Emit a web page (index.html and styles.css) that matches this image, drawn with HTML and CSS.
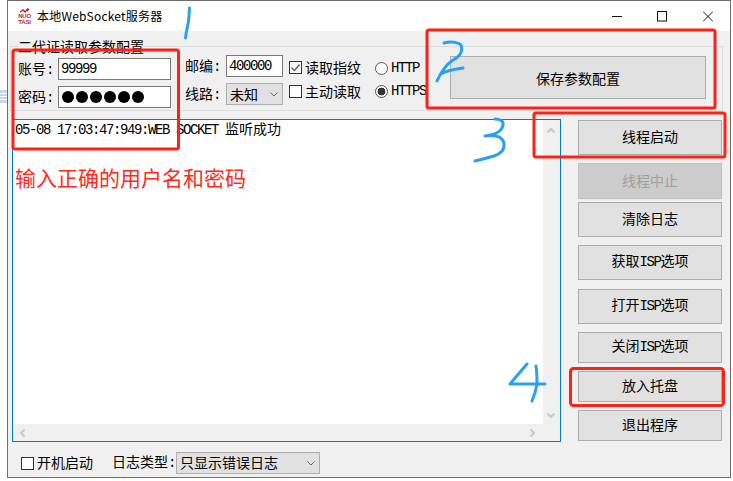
FILE: index.html
```html
<!DOCTYPE html>
<html lang="zh-CN">
<head>
<meta charset="utf-8">
<title>本地WebSocket服务器</title>
<link rel="stylesheet" href="styles.css">
</head>
<body>
<div class="window">
  <header class="titlebar">
    <div class="logo">
      <svg class="logo-mark" width="15" height="5" viewBox="0 0 15 5"><path d="M3 4 L6 2 L8 4 L11 0.5 L10 3 L12 1" fill="none" stroke="#c0272d" stroke-width="1.4"/></svg>
      <span class="logo-text">NUO</span>
      <span class="logo-text">TASI</span>
    </div>
    <span class="title-text">本地WebSocket服务器</span>
    <div class="caption">
      <svg width="10" height="11" viewBox="0 0 10 11"><path d="M0 5.5H10" stroke="#111" stroke-width="1"/></svg>
      <svg width="10" height="11" viewBox="0 0 10 11"><rect x="0.5" y="0.5" width="9" height="9.5" fill="none" stroke="#111"/></svg>
      <svg class="caption-close" width="10" height="11" viewBox="0 0 10 11"><path d="M0 0.5L10 10.5M10 0.5L0 10.5" stroke="#111" stroke-width="1"/></svg>
    </div>
  </header>

  <main class="client">
    <section class="group">
      <span class="legend">二代证读取参数配置</span>
      <div class="col col-account">
        <label class="field"><span class="label label-account">账号<span class="mono">:</span></span><input class="input input-account" value="99999"></label>
        <div class="field"><span class="label label-account">密码<span class="mono">:</span></span>
          <div class="input input-account password"><i></i><i></i><i></i><i></i><i></i><i></i></div>
        </div>
      </div>
      <div class="col col-net">
        <label class="field"><span class="label label-net">邮编<span class="mono">:</span></span><input class="input input-zip" value="400000"></label>
        <div class="field"><span class="label label-net">线路<span class="mono">:</span></span>
          <div class="select select-line"><span>未知</span>
            <svg width="8" height="5" viewBox="0 0 8 5"><path d="M0.5 0.5L4 4L7.5 0.5" fill="none" stroke="#666"/></svg>
          </div>
        </div>
      </div>
      <div class="col col-checks">
        <div class="check-row">
          <span class="box"><svg width="11" height="11" viewBox="0 0 11 11"><path d="M1.5 5.5L4.5 8.5L9.5 2.5" fill="none" stroke="#555" stroke-width="1.3"/></svg></span>
          <span>读取指纹</span>
        </div>
        <div class="check-row"><span class="box"></span><span>主动读取</span></div>
      </div>
      <div class="col col-radios">
        <div class="radio-row"><span class="radio"></span><span class="mono">HTTP</span></div>
        <div class="radio-row"><span class="radio radio-on"></span><span class="mono">HTTPS</span></div>
      </div>
      <button class="btn btn-save">保存参数配置</button>
    </section>

    <section class="main-row">
      <div class="memo">
        <div class="log"><span class="mono">05-08 17:03:47:949:WEB SOCKET </span>监听成功</div>
        <div class="vbar">
          <svg width="8" height="5" viewBox="0 0 8 5"><path d="M0.5 4.5L4 1L7.5 4.5" fill="none" stroke="#c8c8c8" stroke-width="2"/></svg>
          <svg width="8" height="5" viewBox="0 0 8 5"><path d="M0.5 0.5L4 4L7.5 0.5" fill="none" stroke="#c8c8c8" stroke-width="2"/></svg>
        </div>
        <div class="hbar">
          <svg width="5" height="8" viewBox="0 0 5 8"><path d="M4.5 0.5L1 4L4.5 7.5" fill="none" stroke="#c8c8c8" stroke-width="2"/></svg>
          <svg width="5" height="8" viewBox="0 0 5 8"><path d="M0.5 0.5L4 4L0.5 7.5" fill="none" stroke="#c8c8c8" stroke-width="2"/></svg>
        </div>
        <div class="corner"></div>
        <p class="hint">输入正确的用户名和密码</p>
      </div>
      <nav class="actions">
        <button class="btn btn-act btn-first">线程启动</button>
        <button class="btn btn-act btn-disabled btn-h36">线程中止</button>
        <button class="btn btn-act btn-tight">清除日志</button>
        <button class="btn btn-act">获取<span class="mono">ISP</span>选项</button>
        <button class="btn btn-act btn-gap9">打开<span class="mono">ISP</span>选项</button>
        <button class="btn btn-act btn-short">关闭<span class="mono">ISP</span>选项</button>
        <button class="btn btn-act btn-short">放入托盘</button>
        <button class="btn btn-act btn-short">退出程序</button>
      </nav>
    </section>

    <footer class="footer">
      <span class="box"></span>
      <span class="auto-label">开机启动</span>
      <span class="log-label">日志类型<span class="mono">:</span></span>
      <div class="select select-log"><span>只显示错误日志</span>
        <svg width="8" height="5" viewBox="0 0 8 5"><path d="M0.5 0.5L4 4L7.5 0.5" fill="none" stroke="#666"/></svg>
      </div>
    </footer>
  </main>
</div>

<svg class="annotations" width="733" height="481" viewBox="0 0 733 481">
  <g fill="#c7d6e8">
    <rect x="0" y="90" width="7" height="3"/>
    <rect x="0" y="94" width="7" height="2"/>
    <rect x="0" y="97" width="7" height="2"/>
    <rect x="0" y="100" width="7" height="3"/>
  </g>
  <g fill="none" stroke="#ff2016" stroke-width="3" stroke-linejoin="round">
    <rect x="13" y="50" width="165.5" height="99" rx="2"/>
    <rect x="427" y="30" width="288" height="78" rx="2"/>
    <rect x="534" y="113" width="191" height="44" rx="2"/>
    <rect x="570.5" y="368.5" width="153" height="37" rx="3"/>
  </g>
  <g fill="none" stroke="#29a0f6" stroke-width="3" stroke-linecap="round" stroke-linejoin="round">
    <path d="M189.500 8 C189 14 189 20 188 24 C187 29 186 33 185.500 38"/>
    <path d="M444 43 C450 41 458 42 461 45 C463 50 461 56 453 60 C447 64 441 72 437 81 M441 74 C447 70 456 69 463 68"/>
    <path d="M495 119 C500 119 504 121 503 125 C502 130 499 134 485 136 C493 135 502 136 504 143 C505 150 500 154 494 156 C487 158 480 160 475 161"/>
    <path d="M527 364 C521 371 515 378 510 384 C521 384 534 384 545 384 M536 366 C537 372 537 378 537 384 C536 390 534 396 532 401"/>
  </g>
</svg>
</body>
</html>
```
FILE: styles.css
```css
* { box-sizing: border-box; }
html, body { margin: 0; padding: 0; background: #fff; }
body {
  position: relative;
  width: 733px;
  height: 481px;
  overflow: hidden;
  font-family: "Noto Sans CJK SC", sans-serif;
  font-size: 14px;
  line-height: 20px;
  color: #000;
}
.mono {
  font-family: "Liberation Mono", "Noto Sans CJK SC", monospace;
  font-size: 14px;
  letter-spacing: -1.4px;
  white-space: pre;
}

.window {
  margin-left: 7px;
  width: 724px;
  height: 478px;
  border: 1px solid #6f6f6f;
  display: flex;
  flex-direction: column;
}

/* title bar */
.titlebar {
  height: 30px;
  flex: none;
  display: flex;
  align-items: center;
  padding-left: 9px;
  background: #fff;
}
.logo {
  width: 15px;
  height: 17px;
  margin-right: 5px;
  display: flex;
  flex-direction: column;
  align-items: center;
}
.logo-mark { display: block; }
.logo-text {
  font: bold 6px/6px "Liberation Sans", sans-serif;
  color: #b8242c;
  letter-spacing: -0.2px;
}
.title-text {
  font-size: 12px;
  line-height: 16px;
  letter-spacing: 0.2px;
}
.caption {
  margin-left: auto;
  margin-right: 17px;
  display: flex;
  gap: 35px;
  align-items: center;
}
.caption svg { display: block; }
.caption-close { margin-left: 1px; }

/* client area */
.client {
  flex: 1;
  background: #f0f0f0;
  padding: 15px 7px 0 2px;
  display: flex;
  flex-direction: column;
}
.group {
  position: relative;
  height: 65px;
  flex: none;
  border: 1px solid #dcdcdc;
  display: flex;
  align-items: flex-start;
  padding: 8px 0 0 7px;
}
.legend {
  position: absolute;
  left: 7px;
  top: -10px;
  font-size: 14px;
  line-height: 18px;
  background: #f0f0f0;
}
.col { display: flex; flex-direction: column; }
.field { display: flex; align-items: center; height: 22px; }
.label { display: block; line-height: 22px; }
.label-account { width: 40px; }
.label-net { width: 41px; }

.col-account { margin-top: 3px; gap: 6px; }
.col-net { margin-left: 14px; gap: 6px; }
.col-checks { margin-left: 6px; width: 72px; margin-top: 5px; gap: 10px; }
.col-radios { margin-left: 14px; width: 60px; margin-top: 6px; gap: 9px; }

.input {
  display: block;
  height: 22px;
  border: 1px solid #7a7a7a;
  background: #fff;
  padding: 0 2px;
  margin: 0;
  font-family: "Liberation Mono", monospace;
  font-size: 14px;
  letter-spacing: -1.4px;
  color: #000;
  outline: none;
  border-radius: 0;
}
.input-account { width: 113px; }
.input-zip { width: 57px; }
.password { display: flex; align-items: center; gap: 2px; padding-left: 3px; }
.password i {
  display: block;
  width: 12px;
  height: 12px;
  border-radius: 50%;
  background: #000;
}
.select {
  display: flex;
  align-items: center;
  justify-content: space-between;
  height: 22px;
  background: #e1e1e1;
  border: 1px solid #adadad;
  padding: 0 4px 0 3px;
}
.select-line { width: 57px; }
.select-log { width: 144px; height: 22px; padding-bottom: 2px; }
.select-log svg { margin-top: 2px; }

.check-row, .radio-row { display: flex; align-items: center; height: 14px; gap: 3px; }
.box {
  display: block;
  flex: none;
  width: 13px;
  height: 13px;
  border: 1px solid #333;
  background: #fff;
}
.box svg { display: block; }
.radio {
  display: block;
  flex: none;
  width: 13px;
  height: 13px;
  border: 1px solid #555;
  border-radius: 50%;
  background: #fff;
}
.radio-on {
  background: radial-gradient(circle, #333 0, #333 3.6px, #fff 4.2px);
}

/* buttons */
.btn {
  display: block;
  padding: 0 0 3px;
  margin: 0;
  background: #e1e1e1;
  border: 1px solid #adadad;
  border-radius: 0;
  color: #000;
  font-family: "Noto Sans CJK SC", sans-serif;
  font-size: 14px;
  line-height: 20px;
  text-align: center;
}
.btn-save {
  width: 256px;
  height: 43px;
  margin: 1px 16px 0 auto;
  padding-bottom: 0;
}

/* main row */
.main-row {
  margin-top: 8px;
  display: flex;
  align-items: flex-start;
  height: 323px;
  flex: none;
}
.memo {
  position: relative;
  width: 549px;
  height: 323px;
  margin-left: 2px;
  border: 1px solid #0078d7;
  display: grid;
  grid-template-columns: 530px 17px;
  grid-template-rows: 304px 17px;
  background: #f0f0f0;
}
.log {
  background: #fff;
  padding: 0 2px;
  line-height: 16px;
}
.vbar {
  display: flex;
  flex-direction: column;
  align-items: center;
  justify-content: space-between;
  padding: 8px 2px 6px 0;
  height: 304px;
}
.hbar {
  display: flex;
  align-items: center;
  justify-content: space-between;
  padding: 0 8px 0 7px;
}
.corner { background: #f0f0f0; }
.hint {
  position: absolute;
  left: 2px;
  top: 44px;
  margin: 0;
  font-size: 21px;
  line-height: 26px;
  color: #ff2a1a;
  white-space: nowrap;
}
.actions {
  margin-left: 17px;
  width: 144px;
  margin-top: 1px;
  display: flex;
  flex-direction: column;
}
.btn-act { width: 144px; height: 35px; margin-top: 8px; flex: none; }
.btn-first { margin-top: 0; }
.btn-h36 { height: 36px; }
.btn-tight { margin-top: 3px; }
.btn-gap9 { margin-top: 9px; }
.btn-short { height: 31px; }
.btn-disabled {
  background: #cccccc;
  border-color: #bfbfbf;
  color: #a0a0a0;
}

/* footer */
.footer {
  margin-top: 10px;
  height: 22px;
  display: flex;
  align-items: center;
  padding-left: 11px;
}
.auto-label { margin-left: 3px; margin-bottom: 2px; }
.log-label { margin-left: 19px; margin-bottom: 2px; width: 64px; flex: none; }

/* hand annotations on top of the screenshot */
.annotations {
  position: absolute;
  left: 0;
  top: 0;
  pointer-events: none;
}
```
